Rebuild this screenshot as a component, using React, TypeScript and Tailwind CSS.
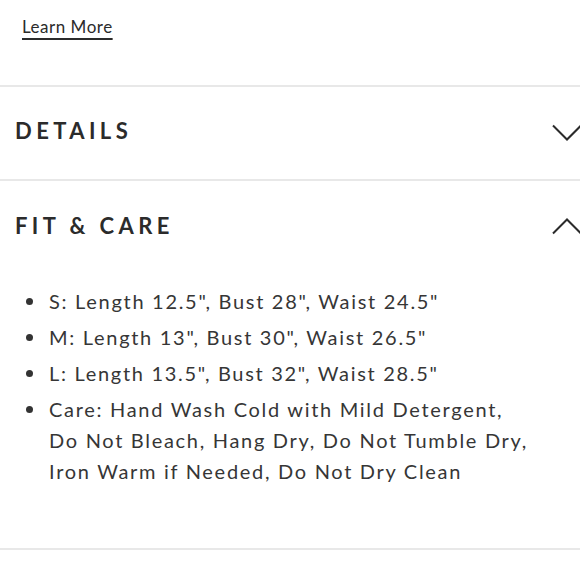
import React from 'react';

const ChevronDown = () => (
    <svg width="30" height="18" viewBox="0 0 30 18" fill="none" stroke="#2b2b2b" strokeWidth="2">
        <path d="M1 1.5 L15 15.5 L29 1.5" />
    </svg>
);

const ChevronUp = () => (
    <svg width="30" height="18" viewBox="0 0 30 18" fill="none" stroke="#2b2b2b" strokeWidth="2">
        <path d="M1 16.5 L15 2.5 L29 16.5" />
    </svg>
);

const sizes = [
    'S: Length 12.5", Bust 28", Waist 24.5"',
    'M: Length 13", Bust 30", Waist 26.5"',
    'L: Length 13.5", Bust 32", Waist 28.5"',
    'Care: Hand Wash Cold with Mild Detergent, Do Not Bleach, Hang Dry, Do Not Tumble Dry, Iron Warm if Needed, Do Not Dry Clean',
];

export default function App() {
    return (
        <div className="w-[580px] h-[580px] overflow-hidden bg-white text-[#333333]" style={{ fontFamily: 'Lato, "Open Sans", sans-serif' }}>
            <div className="h-[85px] pl-[22px] pt-[15px]">
                <a className="text-[17px] leading-[24px] tracking-[0.03em] text-[#2b2b2b] underline decoration-2 underline-offset-[5px] decoration-[#2b2b2b]">Learn More</a>
            </div>
            <div className="h-[2px] bg-[#e8e8e8]" />
            <div className="h-[92px] flex items-center justify-between pl-[15px] pb-[5px]">
                <h3 className="text-[22px] font-bold tracking-[0.2em] text-[#2b2b2b]">DETAILS</h3>
                <div className="mr-[-2px] mt-[5px]"><ChevronDown /></div>
            </div>
            <div className="h-[2px] bg-[#e8e8e8]" />
            <div className="h-[92px] flex items-center justify-between pl-[15px] pb-[3px]">
                <h3 className="text-[22px] font-bold tracking-[0.2em] text-[#2b2b2b]">FIT &amp; CARE</h3>
                <div className="mr-[-2px] mt-[1px]"><ChevronUp /></div>
            </div>
            <ul className="pl-[49px] pr-[45px] pt-[13px] pb-[61px] text-[20px] leading-[31px] tracking-[0.085em] text-[#363636]">
                {sizes.map((s) => (
                    <li key={s} className="relative mb-[5px] last:mb-0">
                        <span className="absolute left-[-23px] top-[12px] w-[7px] h-[7px] rounded-full bg-[#333333]" />
                        {s}
                    </li>
                ))}
            </ul>
            <div className="h-[2px] bg-[#e8e8e8]" />
        </div>
    );
}
